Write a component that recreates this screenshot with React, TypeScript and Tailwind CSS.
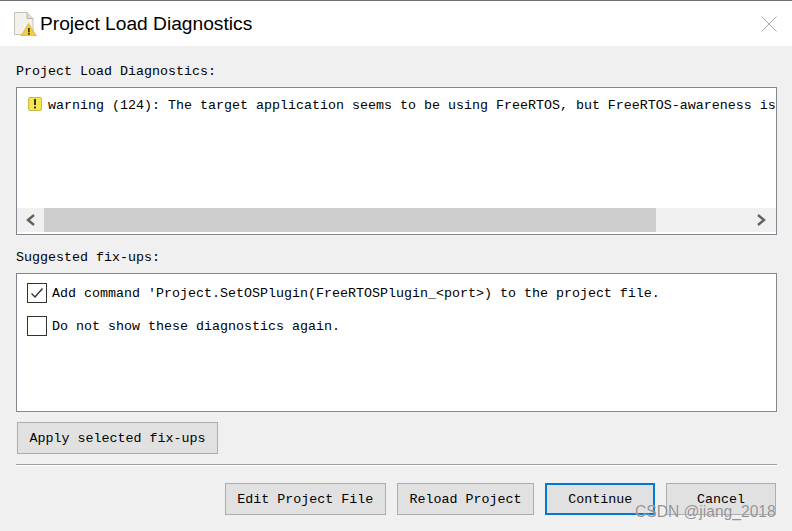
import React from "react";

const mono = "font-['Liberation_Mono',monospace] text-[13.33px] leading-4 text-black whitespace-pre";
const btn = `h-8 border border-[#adadad] bg-[#e1e1e1] pt-[2px] ${mono}`;

function DocWarningIcon() {
  return (
    <svg width="24" height="24" viewBox="0 0 24 24" className="shrink-0">
      <path d="M1.5 0.5H14L20 6.5V22.5H1.5Z" fill="#f3f1ea" stroke="#c4c1b8" />
      <path d="M14 0.5V6.5H20" fill="#dedbd2" stroke="#b9b6ad" />
      <path d="M15.5 11.5L23.5 24H8Z" fill="#f2cf3c" stroke="#c9a52a" strokeWidth="0.6" />
      <rect x="15" y="16" width="1.8" height="4.4" fill="#4a3c10" />
      <rect x="15" y="21" width="1.8" height="1.8" fill="#4a3c10" />
    </svg>
  );
}

function WarnBadge() {
  return (
    <span className="flex h-[14px] w-[14px] shrink-0 items-center justify-center rounded-[2px] border border-[#c9b84a] bg-[#f2e651]">
      <svg width="4" height="10" viewBox="0 0 4 10">
        <rect x="1" y="0" width="2" height="6" fill="#3a3410" />
        <rect x="1" y="7.5" width="2" height="2" fill="#3a3410" />
      </svg>
    </span>
  );
}

function Check({ checked, label }: { checked?: boolean; label: string }) {
  return (
    <div className="flex items-center gap-[5px]">
      <span className="flex h-5 w-5 items-center justify-center border border-[#333] bg-white">
        {checked && (
          <svg width="14" height="12" viewBox="0 0 14 12" fill="none">
            <path d="M1.5 6.5L5 10L12.5 1.5" stroke="#333" strokeWidth="1.4" />
          </svg>
        )}
      </span>
      <span className={`mt-[2px] ${mono}`}>{label}</span>
    </div>
  );
}

export default function App() {
  return (
    <div className="relative flex h-[531px] w-[792px] flex-col overflow-hidden bg-[#f0f0f0]">
      <div className="h-px bg-[#707070]" />
      <div className="flex h-[45px] items-center bg-white pl-[13px] pr-4">
        <DocWarningIcon />
        <span className="ml-[3px] font-['Liberation_Sans',sans-serif] text-[19.2px] leading-6 text-black">
          Project Load Diagnostics
        </span>
        <svg width="16" height="16" viewBox="0 0 16 16" className="ml-auto mr-[-1px]">
          <path d="M0.5 0.5L15.5 15.5M15.5 0.5L0.5 15.5" stroke="#a8a8a8" />
        </svg>
      </div>

      <div className="flex flex-1 flex-col px-4">
        <div className={`mt-[18px] h-4 ${mono}`}>Project Load Diagnostics:</div>

        <div className="mt-[7px] flex h-[148px] w-[761px] flex-col border border-[#828790] bg-white">
          <div className="flex flex-1 items-start gap-[6px] overflow-hidden pl-[11px] pt-[9px]">
            <WarnBadge />
            <span className={`mt-px ${mono}`}>
              warning (124): The target application seems to be using FreeRTOS, but FreeRTOS-awareness is not enabled
            </span>
          </div>
          <div className="mb-[2px] flex h-6 items-stretch bg-[#f0f0f0]">
            <span className="flex w-[27px] items-center justify-center">
              <svg width="11" height="12" viewBox="0 0 11 12" fill="none">
                <path d="M9 1L3 6L9 11" stroke="#606060" strokeWidth="2.4" />
              </svg>
            </span>
            <span className="w-[612px] bg-[#cdcdcd]" />
            <span className="ml-auto flex w-[29px] items-center justify-center">
              <svg width="11" height="12" viewBox="0 0 11 12" fill="none">
                <path d="M2 1L8 6L2 11" stroke="#606060" strokeWidth="2.4" />
              </svg>
            </span>
          </div>
        </div>

        <div className={`mt-[15px] h-4 ${mono}`}>Suggested fix-ups:</div>

        <div className="mt-[7px] flex h-[139px] w-[761px] flex-col gap-[13px] border border-[#828790] bg-white pl-[10px] pt-[9px]">
          <Check checked label="Add command 'Project.SetOSPlugin(FreeRTOSPlugin_<port>) to the project file." />
          <Check label="Do not show these diagnostics again." />
        </div>

        <button className={`ml-px mt-[10px] w-[201px] ${btn}`}>Apply selected fix-ups</button>

        <div className="mt-[10px] h-[2px] w-[761px] border-t border-[#a0a0a0] bg-white" />

        <div className="ml-[209px] mt-[17px] flex gap-[11px]">
          <button className={`w-[161px] ${btn}`}>Edit Project File</button>
          <button className={`w-[138px] ${btn}`}>Reload Project</button>
          <button className={`h-8 w-[110px] border-2 border-[#0078d7] bg-[#e1e1e1] pt-[2px] ${mono}`}>Continue</button>
          <button className={`w-[110px] ${btn}`}>Cancel</button>
        </div>
      </div>

      {/* csdn watermark */}
      <span className="absolute left-[635px] top-[503px] font-['Liberation_Sans',sans-serif] text-[15.6px] leading-[18px] text-[#8a8a8a] opacity-90 [text-shadow:0_0_1px_#fff]">
        CSDN @jiang_2018
      </span>
    </div>
  );
}
